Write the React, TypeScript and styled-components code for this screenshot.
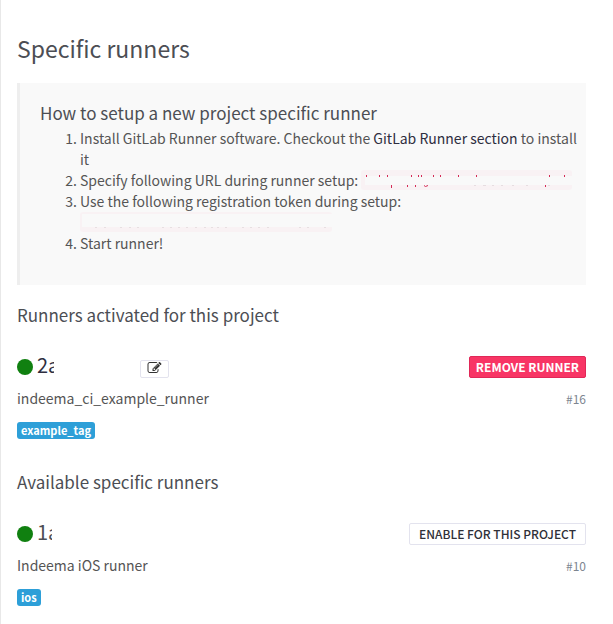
import React from "react";
import styled, { createGlobalStyle, css } from "styled-components";

const GlobalStyle = createGlobalStyle`
  *, *::before, *::after { box-sizing: border-box; }
  body {
    margin: 0;
    background: #fff;
    color: #555;
    font-family: "Source Sans Pro", "Noto Sans CJK SC", "Noto Sans", sans-serif;
    font-size: 14px;
    line-height: 21px;
  }
`;

const Page = styled.main`
  min-height: 100vh;
  border-left: 1px solid #e8e8e8;
  padding: 31px 27px 16px 16px;
`;

const Title = styled.h1`
  margin: 0 0 18px;
  font-size: 23px;
  line-height: 34px;
  font-weight: 400;
  color: #4c4e54;
`;

const Callout = styled.section`
  border-left: 3px solid #eee;
  background: #f9f9f9;
  padding: 18px 4px 31px 20px;
  margin-bottom: 17px;
`;

const CalloutTitle = styled.h2`
  margin: 0 0 3px;
  font-size: 17px;
  line-height: 24px;
  font-weight: 400;
  color: #4c4e54;
`;

const Steps = styled.ol`
  margin: 0;
  padding-left: 40px;
`;

const DocLink = styled.a`
  color: #2e2e40;
  text-decoration: none;
`;

const Code = styled.code<{ $wide?: boolean }>`
  display: inline-block;
  vertical-align: top;
  width: ${(p) => (p.$wide ? "252px" : "211px")};
  height: 20px;
  border-radius: 3px;
  background: #f9f2f4;

  svg { display: block; }
`;

const SectionTitle = styled.h2`
  margin: 0 0 26px;
  font-size: 17px;
  line-height: 26px;
  font-weight: 400;
  color: #4c4e54;
`;

const Runner = styled.article`
  margin-bottom: 30px;

  &:last-child { margin-bottom: 0; }
`;

const Row = styled.div`
  display: flex;
  align-items: center;
  justify-content: space-between;
`;

const Identity = styled.div`
  display: flex;
  align-items: center;
  height: 26px;
`;

const Status = styled.span`
  width: 16px;
  height: 16px;
  margin-right: 4px;
  border-radius: 50%;
  background: #108010;
`;

const Token = styled.span<{ $linked?: boolean }>`
  width: ${(p) => (p.$linked ? "17px" : "15px")};
  margin-right: 86px;
  padding-bottom: 4px;
  overflow: hidden;
  white-space: nowrap;
  font-size: 20px;
  line-height: 26px;
  color: ${(p) => (p.$linked ? "#2e2e40" : "#4c4e54")};
`;

const Button = styled.button<{ $danger?: boolean }>`
  height: 22px;
  padding: 0 9px;
  border: 1px solid #e3e3ee;
  border-radius: 2px;
  background: #fff;
  color: #2f3038;
  font: 500 12px/20px "Source Sans Pro", "Noto Sans CJK SC", sans-serif;
  text-transform: uppercase;
  cursor: pointer;

  ${(p) =>
    p.$danger &&
    css`
      padding: 0 6px;
      border-color: #e02858;
      background: #f83565;
      color: #fff;
      font-weight: 700;
    `}
`;

const EditButton = styled.button`
  display: grid;
  place-items: center;
  width: 29px;
  height: 18px;
  margin-top: 3px;
  padding: 0;
  border: 1px solid #e3e3ee;
  border-radius: 2px;
  background: #fff;
  color: #333;
  cursor: pointer;
`;

const Details = styled(Row)`
  margin-top: 8px;
`;

const Description = styled.span`
  color: #555;
`;

const Number = styled.small`
  font-size: 12px;
  color: #7d8590;
`;

const Tag = styled.span`
  display: inline-block;
  margin-top: 13px;
  padding: 0 4px 1px;
  border-radius: 3px;
  background: #2d9fd8;
  color: #fff;
  font-size: 11px;
  line-height: 16px;
  font-weight: 700;
  vertical-align: top;
`;

const urlMarks = [
  [5, 5], [18, 5], [26, 5], [50, 5], [57, 5], [60, 5], [72, 5], [79, 5], [97, 5], [115, 5], [188, 5], [203, 5],
  [46, 15], [54, 15], [184, 15],
];
const tokenMarks = [15, 24, 40, 49, 57, 82, 90, 98, 106, 115, 124, 131, 137, 145, 162, 170, 178, 187, 219, 227, 244];

const MaskedUrl = () => (
  <Code aria-label="Runner URL hidden">
    <svg width="211" height="20" aria-hidden="true">
      <rect x="4" y="6" width="207" height="9" fill="#f9f9f9" />
      {urlMarks.map(([x, y]) => (
        <rect key={`${x}-${y}`} x={x} y={y} width="1" height="2" fill="#d42a55" />
      ))}
      <path d="M30.500 15v3M63 15.500q1 2 4 0" fill="none" stroke="#d42a55" strokeWidth="1" />
      <path d="M113 15.500h2m7 0h3m6 0h2m7 0h2m9 0h2m12 0h2m20 0h2" stroke="#e6dde0" />
    </svg>
  </Code>
);

const MaskedToken = () => (
  <Code $wide aria-label="Registration token hidden">
    <svg width="252" height="20" aria-hidden="true">
      <rect x="2" y="2" width="250" height="13" fill="#f9f9f9" />
      {tokenMarks.map((x) => (
        <rect key={x} x={x} y="15" width="2" height="1" fill="#e7dfe1" />
      ))}
    </svg>
  </Code>
);

const EditIcon = () => (
  <svg width="15" height="13" viewBox="0 0 1792 1664" fill="currentColor" aria-hidden="true">
    <path d="M888 1056l116-116-152-152-116 116v56h96v96h56zm440-720q-16-16-33 1L945 687q-17 17-1 33t33-1l350-350q17-17 1-33zm80 594v190q0 119-84.500 203.500T1120 1408H288q-119 0-203.500-84.500T0 1120V288Q0 169 84.500 84.500T288 0h832q63 0 117 25 15 7 18 23 3 17-9 29l-49 49q-14 14-32 8-23-6-45-6H288q-66 0-113 47t-47 113v832q0 66 47 113t113 47h832q66 0 113-47t47-113V994q0-13 9-22l64-64q15-15 35-7t20 29zm-96-738l288 288-672 672H640V864zm444 132l-92 92-288-288 92-92q28-28 68-28t68 28l152 152q28 28 28 68t-28 68z" />
  </svg>
);

type RunnerData = {
  token: string;
  name: string;
  number: string;
  tag: string;
  active?: boolean;
};

const RunnerItem = ({ token, name, number, tag, active }: RunnerData) => (
  <Runner>
    <Row>
      <Identity>
        <Status role="img" aria-label="Online" />
        <Token $linked={active}>{token}</Token>
        {active && (
          <EditButton type="button" aria-label="Edit runner">
            <EditIcon />
          </EditButton>
        )}
      </Identity>
      <Button type="button" $danger={active}>
        {active ? "Remove Runner" : "Enable for this project"}
      </Button>
    </Row>
    <Details>
      <Description>{name}</Description>
      <Number>{number}</Number>
    </Details>
    <Tag>{tag}</Tag>
  </Runner>
);

export default function App() {
  return (
    <>
      <GlobalStyle />
      <Page>
        <Title>Specific runners</Title>
        <Callout>
          <CalloutTitle>How to setup a new project specific runner</CalloutTitle>
          <Steps>
            <li>
              Install GitLab Runner software. Checkout the <DocLink href="#install">GitLab Runner section</DocLink> to
              install it
            </li>
            <li>
              Specify following URL during runner setup: <MaskedUrl />
            </li>
            <li>
              Use the following registration token during setup: <MaskedToken />
            </li>
            <li>Start runner!</li>
          </Steps>
        </Callout>
        <SectionTitle>Runners activated for this project</SectionTitle>
        <RunnerItem token="2a" name="indeema_ci_example_runner" number="#16" tag="example_tag" active />
        <SectionTitle>Available specific runners</SectionTitle>
        <RunnerItem token="1a" name="Indeema iOS runner" number="#10" tag="ios" />
      </Page>
    </>
  );
}
